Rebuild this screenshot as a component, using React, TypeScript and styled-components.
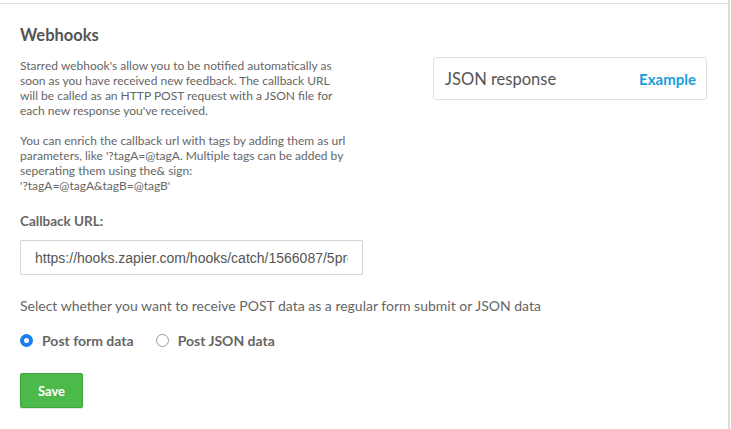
import React from "react";
import styled, { createGlobalStyle } from "styled-components";

const Global = createGlobalStyle`
  html, body { margin: 0; padding: 0; background: #fff; }
  body { font-family: "Lato", "Liberation Sans", sans-serif; }
`;

const Frame = styled.div`
  width: 730px;
  height: 429px;
  box-sizing: border-box;
  border-right: 2px solid #dcdcdc;
  overflow: hidden;
`;

const TopRule = styled.div`
  height: 3px;
  border-bottom: 1px solid #e2e2e2;
`;

const Content = styled.div`
  padding: 20px 0 0 20px;
  color: #5e5e5e;
`;

const TopRow = styled.div`
  display: flex;
  align-items: flex-start;
`;

const Intro = styled.div`
  width: 346px;
`;

const Title = styled.h2`
  margin: 0 0 12px;
  font-size: 16.5px;
  font-weight: 700;
  color: #555;
  line-height: 22px;
`;

const Para = styled.p`
  margin: 0 0 15px;
  font-size: 12px;
  line-height: 15px;
  color: #666;
`;

const InfoCard = styled.div`
  margin: 33px 0 0 67px;
  width: 274px;
  height: 43px;
  box-sizing: border-box;
  border: 1px solid #e0e0e0;
  border-radius: 3px;
  display: flex;
  align-items: center;
  justify-content: space-between;
  padding: 0 10px 0 11px;
`;

const CardTitle = styled.span`
  font-size: 16.5px;
  color: #555;
`;

const CardLink = styled.a`
  font-size: 15px;
  font-weight: 700;
  color: #1a9ddb;
  text-decoration: none;
`;

const Label = styled.div`
  margin-top: 5px;
  font-size: 13.5px;
  font-weight: 700;
  color: #666;
  line-height: 16px;
`;

const UrlInput = styled.input`
  display: block;
  margin-top: 11px;
  width: 343px;
  height: 35px;
  box-sizing: border-box;
  border: 1px solid #d6d6d6;
  border-radius: 1px;
  padding: 0 14px;
  font-family: "Liberation Sans", sans-serif;
  font-size: 14px;
  color: #555;
  outline: none;
`;

const Question = styled.div`
  margin-top: 23px;
  font-size: 14px;
  line-height: 16px;
  color: #666;
`;

const RadioRow = styled.div`
  margin-top: 18px;
  display: flex;
  align-items: center;
  gap: 22px;
`;

const RadioOption = styled.label`
  display: flex;
  align-items: center;
  gap: 9px;
  font-size: 14px;
  font-weight: 700;
  color: #666;
`;

const RadioDot = styled.span<{ $checked?: boolean }>`
  width: 13px;
  height: 13px;
  border-radius: 50%;
  box-sizing: border-box;
  border: ${(p) => (p.$checked ? "4px solid #1a7ff0" : "1px solid #9a9a9a")};
  background: #fff;
`;

const SaveButton = styled.button`
  display: block;
  margin-top: 24px;
  width: 63px;
  height: 35px;
  border: 1px solid #3fa43e;
  border-radius: 2px;
  background: #4cb94b;
  color: #fff;
  font-family: "Lato", sans-serif;
  font-weight: 700;
  font-size: 13px;
  box-shadow: 0 1px 1px rgba(0, 0, 0, 0.12);
`;

export default function App() {
  return (
    <>
      <Global />
      <Frame>
        <TopRule />
        <Content>
          <TopRow>
            <Intro>
              <Title>Webhooks</Title>
              <Para>
                Starred webhook's allow you to be notified automatically as
                <br />
                soon as you have received new feedback. The callback URL
                <br />
                will be called as an HTTP POST request with a JSON file for
                <br />
                each new response you've received.
              </Para>
              <Para>
                You can enrich the callback url with tags by adding them as url
                <br />
                parameters, like '?tagA=@tagA. Multiple tags can be added by
                <br />
                seperating them using the&amp; sign:
                <br />
                '?tagA=@tagA&amp;tagB=@tagB'
              </Para>
            </Intro>
            <InfoCard>
              <CardTitle>JSON response</CardTitle>
              <CardLink href="#">Example</CardLink>
            </InfoCard>
          </TopRow>
          <Label>Callback URL:</Label>
          <UrlInput readOnly value="https://hooks.zapier.com/hooks/catch/1566087/5proxyz/" />
          <Question>
            Select whether you want to receive POST data as a regular form submit or JSON data
          </Question>
          <RadioRow>
            <RadioOption>
              <RadioDot $checked />
              Post form data
            </RadioOption>
            <RadioOption>
              <RadioDot />
              Post JSON data
            </RadioOption>
          </RadioRow>
          <SaveButton>Save</SaveButton>
        </Content>
      </Frame>
    </>
  );
}
